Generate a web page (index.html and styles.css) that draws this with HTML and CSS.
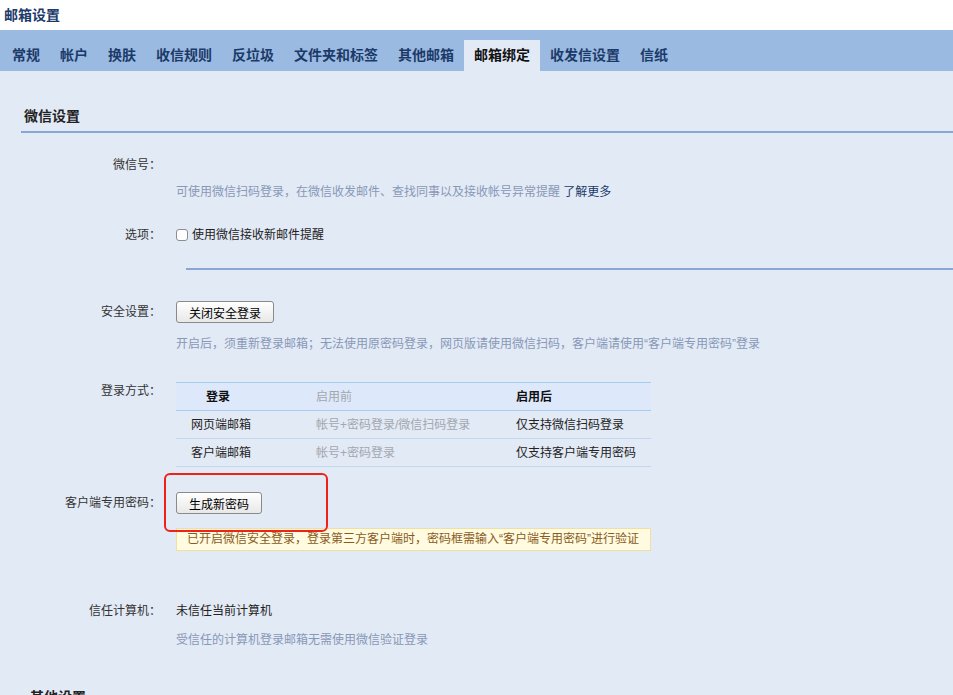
FILE: index.html
```html
<!DOCTYPE html>
<html lang="zh-CN">

<head>
    <meta charset="UTF-8">
    <meta name="viewport" content="width=device-width, initial-scale=1.0">
    <title>邮箱设置</title>
    <link rel="stylesheet" href="styles.css">
</head>

<body>

    <div class="topbar">邮箱设置</div>

    <ul class="tabs">
        <li>常规</li>
        <li>帐户</li>
        <li>换肤</li>
        <li>收信规则</li>
        <li>反垃圾</li>
        <li>文件夹和标签</li>
        <li>其他邮箱</li>
        <li class="active">邮箱绑定</li>
        <li>收发信设置</li>
        <li>信纸</li>
    </ul>

    <div class="section">
        <h3 class="section-title">微信设置</h3>

        <div class="row row-wechat">
            <div class="label">微信号：</div>
            <div class="value">
                <div class="empty-line"></div>
                <div class="hint">可使用微信扫码登录，在微信收发邮件、查找同事以及接收帐号异常提醒 <a class="link" href="#">了解更多</a></div>
            </div>
        </div>

        <div class="row row-option">
            <div class="label">选项：</div>
            <div class="value">
                <label class="check"><input type="checkbox"> 使用微信接收新邮件提醒</label>
            </div>
        </div>

        <div class="divider"></div>

        <div class="row row-security">
            <div class="label label-btn">安全设置：</div>
            <div class="value">
                <button class="btn">关闭安全登录</button>
                <div class="hint">开启后，须重新登录邮箱；无法使用原密码登录，网页版请使用微信扫码，客户端请使用“客户端专用密码”登录</div>
            </div>
        </div>

        <div class="row row-login">
            <div class="label">登录方式：</div>
            <div class="value">
                <table class="login-table">
                    <thead>
                        <tr>
                            <th class="col-first">登录</th>
                            <th class="before">启用前</th>
                            <th>启用后</th>
                        </tr>
                    </thead>
                    <tbody>
                        <tr>
                            <td>网页端邮箱</td>
                            <td class="before">帐号+密码登录/微信扫码登录</td>
                            <td>仅支持微信扫码登录</td>
                        </tr>
                        <tr>
                            <td>客户端邮箱</td>
                            <td class="before">帐号+密码登录</td>
                            <td>仅支持客户端专用密码</td>
                        </tr>
                    </tbody>
                </table>
            </div>
        </div>

        <div class="row row-client">
            <div class="label label-btn">客户端专用密码：</div>
            <div class="value">
                <div class="btn-wrap">
                    <button class="btn">生成新密码</button>
                    <span class="highlight"></span>
                </div>
                <div class="notice">已开启微信安全登录，登录第三方客户端时，密码框需输入“客户端专用密码”进行验证</div>
            </div>
        </div>

        <div class="row row-trust">
            <div class="label">信任计算机：</div>
            <div class="value">
                <div class="plain">未信任当前计算机</div>
                <div class="hint">受信任的计算机登录邮箱无需使用微信验证登录</div>
            </div>
        </div>

        <h3 class="section-title next-title">其他设置</h3>
    </div>

</body>

</html>
```

FILE: styles.css
```css
body {
    margin: 0;
    background-color: #e2eaf6;
    font-family: "Liberation Sans", "Noto Sans CJK SC", sans-serif;
    font-size: 12px;
    color: #222;
    overflow: hidden;
}

.topbar {
    height: 30px;
    line-height: 30px;
    padding-left: 4px;
    background: #fff;
    color: #1c3a69;
    font-size: 14px;
    font-weight: bold;
}

.tabs {
    display: flex;
    list-style: none;
    margin: 0;
    padding: 10px 0 0 2px;
    height: 31px;
    background: #9bbae1;
}

.tabs li {
    padding: 0 10px;
    line-height: 31px;
    font-size: 14px;
    font-weight: bold;
    color: #1c3a69;
    cursor: pointer;
}

.tabs li.active {
    background: #e2eaf6;
    color: #111;
}

.section {
    margin-left: 21px;
}

.section-title {
    margin: 35px 0 0;
    padding: 0 0 5px 3px;
    line-height: 20px;
    font-size: 14px;
    font-weight: bold;
    color: #222;
    border-bottom: 2px solid #88a6d6;
}

.next-title {
    margin-top: 38px;
    padding-left: 9px;
    border-bottom: none;
}

.row {
    display: flex;
    align-items: flex-start;
}

.label {
    width: 140px;
    flex-shrink: 0;
    text-align: right;
    line-height: 18px;
    color: #333;
}

.label-btn {
    line-height: 22px;
}

.value {
    margin-left: 15px;
    line-height: 18px;
}

.empty-line {
    height: 18px;
}

.hint {
    margin-top: 9px;
    color: #8898b7;
}

.link {
    color: #1c3a69;
    text-decoration: none;
}

.row-wechat {
    margin-top: 23px;
}

.row-option {
    margin-top: 25px;
}

.check {
    display: flex;
    align-items: center;
    color: #222;
}

.check input {
    appearance: none;
    width: 12px;
    height: 12px;
    margin: 0 4px 0 0;
    border: 1px solid #8e8e8e;
    border-radius: 3px;
    background: #fff;
}

.divider {
    margin: 24px 0 0 165px;
    border-top: 2px solid #88a6d6;
}

.row-security {
    margin-top: 31px;
}

.btn {
    height: 22px;
    padding: 0 12px;
    font-family: inherit;
    font-size: 12px;
    color: #000;
    border: 1px solid #8a8a8a;
    border-radius: 3px;
    background: linear-gradient(#ffffff, #e8e8e8);
    cursor: pointer;
}

.row-security .hint {
    margin-top: 12px;
}

.row-login {
    margin-top: 29px;
}

.login-table {
    width: 475px;
    border-collapse: collapse;
    border-top: 1px solid #a8cbf1;
}

.login-table th,
.login-table td {
    text-align: left;
    padding: 0 0 0 15px;
    white-space: nowrap;
}

.login-table th {
    height: 27px;
    background: #dde9fa;
    font-weight: bold;
    color: #111;
    border-bottom: 1px solid #a8cbf1;
}

.login-table th.col-first {
    padding-left: 30px;
    width: 95px;
}

.login-table th.before {
    width: 185px;
    font-weight: normal;
}

.login-table td {
    height: 27px;
    color: #222;
    border-bottom: 1px solid #c3d6ee;
}

.login-table .before {
    color: #a3a7ae;
}

.row-client {
    margin-top: 25px;
}

.btn-wrap {
    position: relative;
    height: 22px;
}

.highlight {
    position: absolute;
    left: -12px;
    top: -19px;
    width: 160px;
    height: 55px;
    border: 2px solid #ee2219;
    border-radius: 6px;
}

.notice {
    margin-top: 14px;
    width: 463px;
    height: 21px;
    line-height: 21px;
    padding-left: 10px;
    background: #fffbe0;
    border: 1px solid #f2df9e;
    color: #8a5a1c;
}

.row-trust {
    margin-top: 51px;
}

.plain {
    color: #222;
}

.row-trust .hint {
    margin-top: 11px;
}
```
